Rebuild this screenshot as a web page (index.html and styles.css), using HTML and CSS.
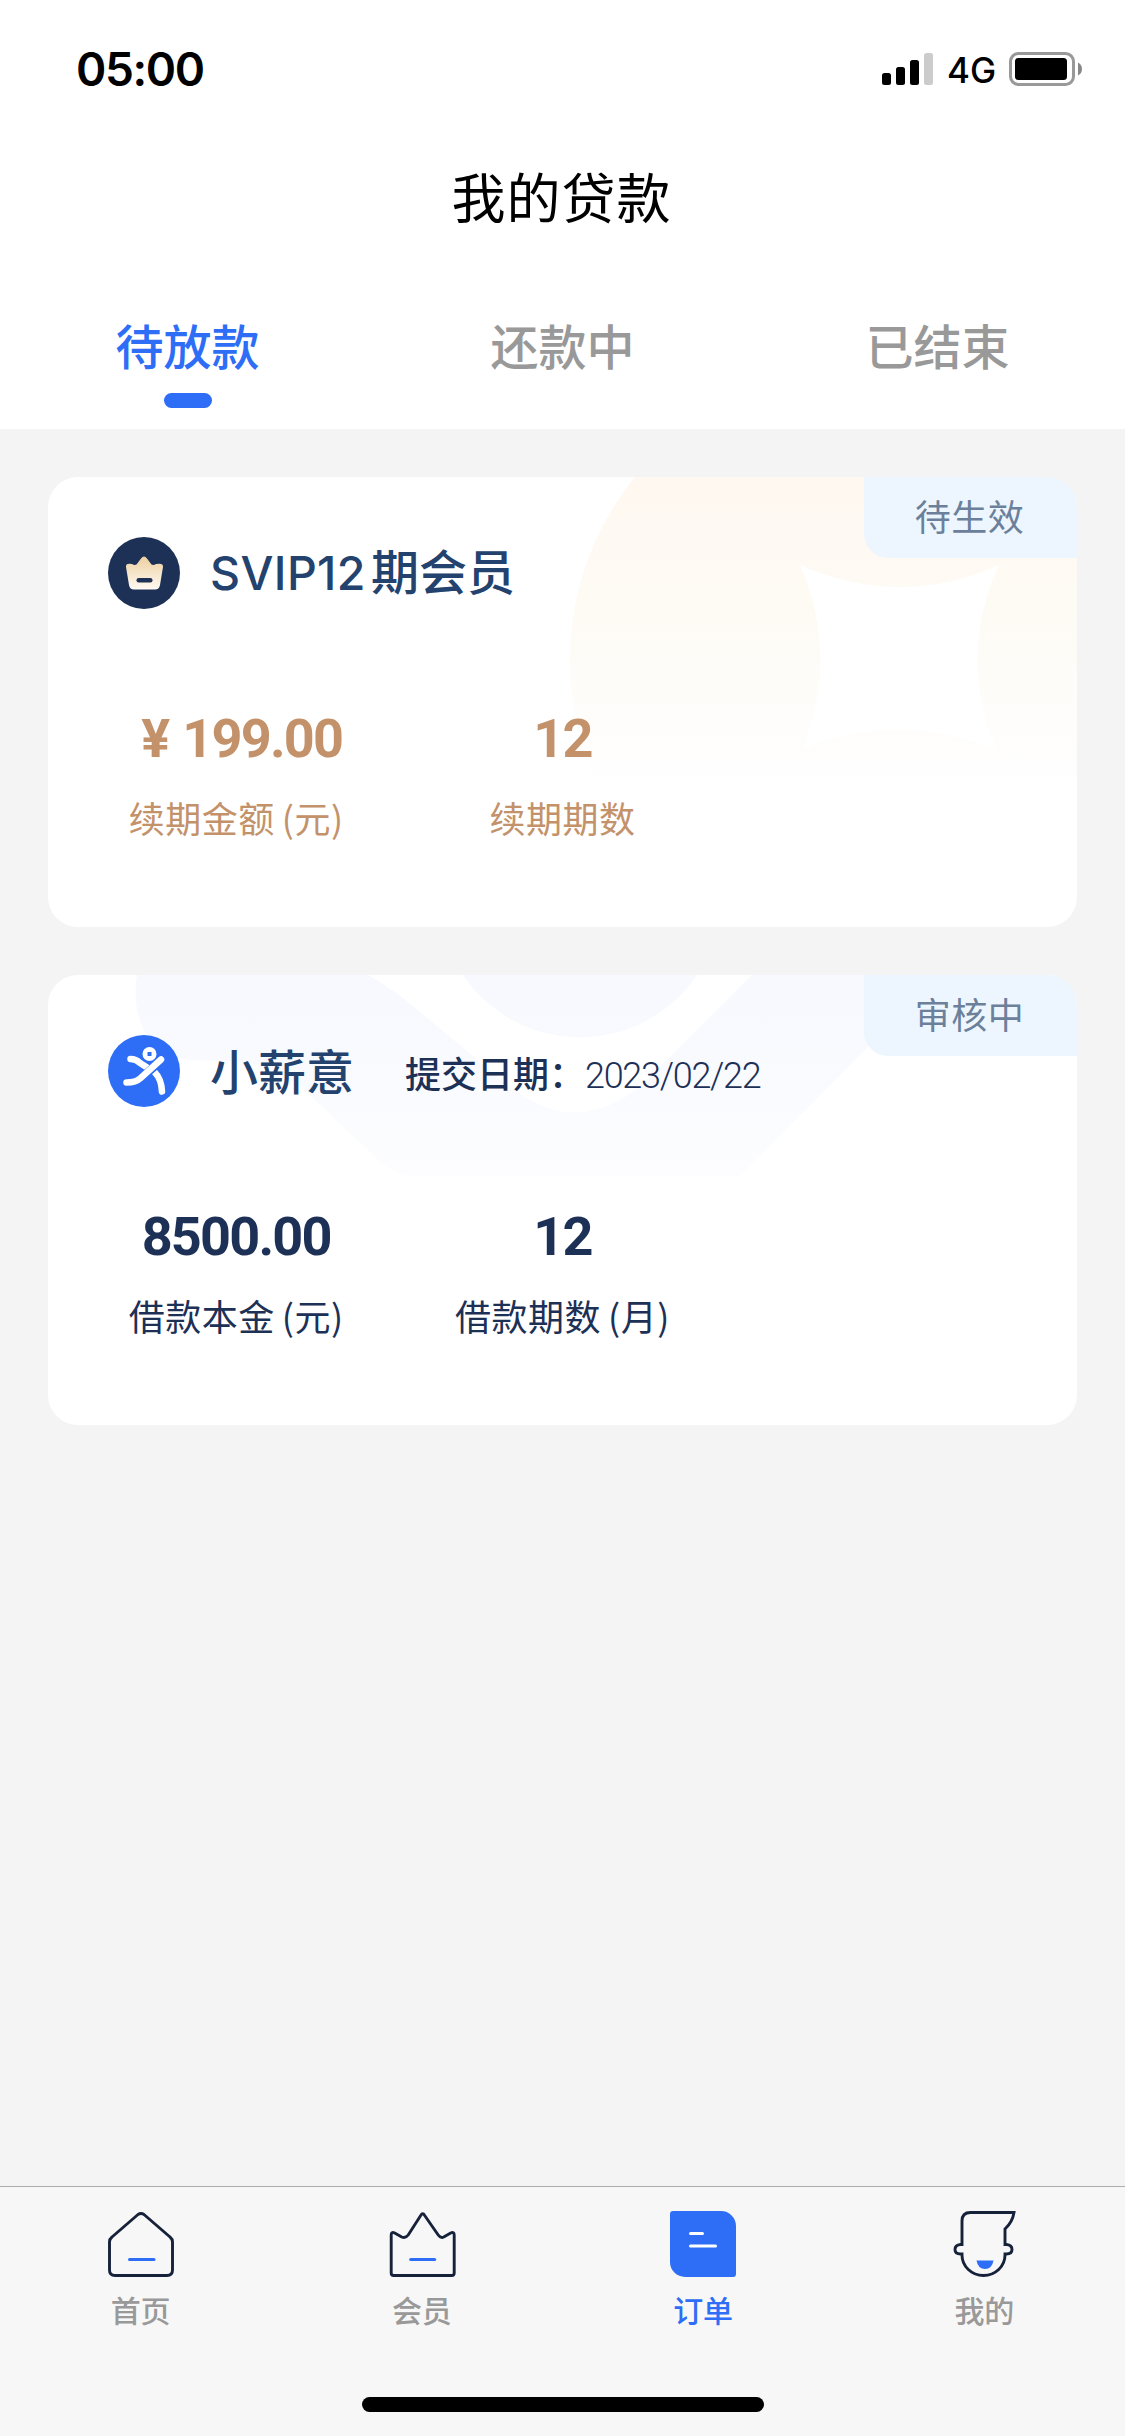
FILE: index.html
```html
<!DOCTYPE html>
<html lang="zh-CN">
<head>
<meta charset="utf-8">
<title>我的贷款</title>
<link rel="stylesheet" href="styles.css">
</head>
<body>
<div class="app">
  <header class="header">
    <div class="status">
      <span class="time">05:00</span>
      <div class="status-right">
        <svg class="signal" width="51" height="34" viewBox="0 0 51 34">
          <rect x="0" y="21" width="9" height="12" rx="2.5"/>
          <rect x="14" y="15" width="9" height="18" rx="2.5"/>
          <rect x="28" y="8" width="9" height="25" rx="2.5"/>
          <rect x="42" y="1" width="9" height="32" rx="2.5" fill="#ccc"/>
        </svg>
        <span class="network">4G</span>
        <svg width="73" height="34" viewBox="0 0 73 34">
          <rect x="1.5" y="1.5" width="63" height="31" rx="8" fill="none" stroke="#999" stroke-width="3"/>
          <rect x="6" y="6" width="52" height="22" rx="3.5"/>
          <path d="M69 10.5Q73 12.5 73 17T69 23.5Z" fill="#888"/>
        </svg>
      </div>
    </div>
    <h1 class="title">我的贷款</h1>
    <nav class="tabs">
      <a class="tab active">待放款</a>
      <a class="tab">还款中</a>
      <a class="tab">已结束</a>
    </nav>
  </header>

  <main class="list">
    <section class="card gold">
      <svg class="art" width="1029" height="450" viewBox="48 477 1029 450">
        <defs><linearGradient id="sand" gradientUnits="userSpaceOnUse" x1="0" y1="477" x2="0" y2="776"><stop offset="0" stop-color="#fef8f0"/><stop offset=".45" stop-color="#fefbf5"/><stop offset="1" stop-color="#fefefe"/></linearGradient></defs>
        <path d="M594 776A290 290 0 0 1 635 477H1077V776Z" fill="url(#sand)"/>
        <path d="M800 565Q900 609 999 565Q957 658 997 751Q900 709 802 749Q840 658 800 565Z" fill="#fff"/>
      </svg>
      <span class="badge">待生效</span>
      <div class="card-head">
        <svg width="72" height="72" viewBox="0 0 72 72">
          <defs><linearGradient id="crown" x1="0" y1="0" x2="0" y2="1"><stop offset="0" stop-color="#edcf9f"/><stop offset="1" stop-color="#fffaf3"/></linearGradient></defs>
          <circle cx="36" cy="36" r="36" fill="#1d3056"/>
          <path d="M33 21.500Q36 17.500 39 21.500L43.500 27.500Q45.500 28.500 48 27Q55.500 25.500 55 30L52 48Q51.200 52.500 47 52.500H26Q21.800 52.500 21 48L18 30Q17.500 25.500 24 27Q26.500 28.500 28.500 27.500Z" fill="url(#crown)"/>
          <rect x="28.500" y="41" width="16" height="4.500" rx="2.200" fill="#1d3056"/>
        </svg>
        <h2 class="name"><span class="latin">SVIP12</span>期会员</h2>
      </div>
      <div class="stats">
        <div class="stat"><b class="num price"><span class="yen">¥</span>199.00</b><span class="label">续期金额<i>(元)</i></span></div>
        <div class="stat"><b class="num">12</b><span class="label">续期期数</span></div>
      </div>
    </section>

    <section class="card navy">
      <svg class="art" width="1029" height="450" viewBox="48 975 1029 450">
        <defs><linearGradient id="mist" gradientUnits="userSpaceOnUse" x1="0" y1="975" x2="0" y2="1176"><stop offset="0" stop-color="#f7f9fe"/><stop offset=".4" stop-color="#f8fafe"/><stop offset="1" stop-color="#fdfdff"/></linearGradient></defs>
        <path d="M137 975Q132 1005 144 1030Q158 1058 190 1060L230 1061Q280 1064 315 1100L378 1160Q392 1173 410 1176H740L870 1045L940 975H752L665 1062Q645 1084 625 1097Q575 1128 525 1097Q505 1084 485 1066L420 1012Q395 990 368 975Z" fill="url(#mist)"/>
        <path d="M463 975A141 141 0 0 0 697 975Z" fill="url(#mist)"/>
      </svg>
      <span class="badge">审核中</span>
      <div class="card-head">
        <svg width="72" height="72" viewBox="0 0 72 72">
          <circle cx="36" cy="36" r="36" fill="#2e6ef7"/>
          <path fill="#fff" fill-rule="evenodd" d="M41.500 12A7 7 0 0 1 41.500 26A7 7 0 0 1 41.500 12ZM39.500 17V21H43.500V17Z"/>
          <g fill="none" stroke="#fff" stroke-width="6.500" stroke-linecap="round">
            <path d="M22.500 24Q28 24 32 28L39 32.500"/>
            <path d="M46.500 37Q53.500 44 54 56.500"/>
            <path d="M54 25L32 44Q28 48 18.500 47.500" stroke="#2e6ef7" stroke-width="8.500" stroke-linecap="butt"/>
            <path d="M53 24.500L32 43.500Q28 47.500 18.500 47.500"/>
          </g>
        </svg>
        <h2 class="name">小薪意</h2>
        <p class="submitted">提交日期：<span class="date">2023/02/22</span></p>
      </div>
      <div class="stats">
        <div class="stat"><b class="num">8500.00</b><span class="label">借款本金<i>(元)</i></span></div>
        <div class="stat"><b class="num">12</b><span class="label">借款期数<i>(月)</i></span></div>
      </div>
    </section>
  </main>

  <footer class="tabbar">
    <div class="items">
      <a class="item">
        <svg width="66" height="66" viewBox="0 0 66 66">
          <path d="M30 3.500Q33 1.500 36 3.500L62 26Q64.500 28 64.500 31V59Q64.500 64.500 59 64.500H7Q1.500 64.500 1.500 59V31Q1.500 28 4 26Z"/>
          <path class="accent" d="M21.500 48.500H46"/>
        </svg>首页
      </a>
      <a class="item">
        <svg width="66" height="66" viewBox="-.7 0 66 66">
          <path d="M1.500 24Q1.500 20.500 5 22L12 26Q16 27.500 18.500 24L31 4.500Q33 1 35 4.500L48.500 24Q51 27.500 54 26L61 22Q64.500 20.500 64.500 24V62Q64.500 64.500 62 64.500H4Q1.500 64.500 1.500 62Z"/>
          <path class="accent" d="M21 48.500H45"/>
        </svg>会员
      </a>
      <a class="item active">
        <svg width="66" height="66" viewBox="0 0 66 66">
          <path class="solid" d="M3 0H51A15 15 0 0 1 66 15V63Q66 66 63 66H15A15 15 0 0 1 0 51V3Q0 0 3 0Z"/>
          <path class="lines" d="M20.500 22.500H32.500M20.500 35H45.500"/>
        </svg>订单
      </a>
      <a class="item">
        <svg width="66" height="66" viewBox="-1.5 0 66 66">
          <path d="M9.500 33.500V10Q9.500 1.500 18 1.500H61.500Q60 11 52.500 18V33.500H54Q59.500 34 59.500 38.500T54 43H52.500V44A21.500 20.500 0 0 1 9.500 44V43H8Q2.500 43 2.500 38.500T8 33.500Z" class="face"/>
          <path class="mouth" d="M24 49.500H41Q39.500 58 32.500 58T24 49.500Z"/>
        </svg>我的
      </a>
    </div>
    <div class="home-bar"></div>
  </footer>
</div>
</body>
</html>
```

FILE: styles.css
```css
* { box-sizing: border-box; }
body { margin: 0; font-family: "Noto Sans CJK SC", sans-serif; background: #f4f4f4; }
h1, h2, p { margin: 0; }
.app { width: 1125px; height: 2436px; display: flex; flex-direction: column; background: #f4f4f4; overflow: hidden; }

.header { height: 429px; background: #fff; display: flex; flex-direction: column; flex: none; }
.status { height: 138px; padding: 0 43px 0 76px; display: flex; justify-content: space-between; align-items: center; font-family: Inter, sans-serif; color: #000; }
.time { font-size: 46px; font-weight: 600; line-height: 60px; letter-spacing: -1.4px; }
.status-right { display: flex; align-items: center; }
.network { width: 76px; padding: 2px 0 0 14px; font-size: 35px; font-weight: 450; line-height: 40px; }
.title { height: 115px; line-height: 115px; padding-right: 2px; text-align: center; font-size: 54px; font-weight: 400; letter-spacing: 1px; }
.tabs { display: grid; grid-template-columns: repeat(3, 1fr); padding-top: 56px; }
.tab { display: flex; flex-direction: column; align-items: center; font-size: 48px; font-weight: 500; line-height: 70px; color: #999; }
.tab.active { color: #2e6ef7; }
.tab.active::after { content: ""; width: 48px; height: 15px; margin-top: 14px; border-radius: 7.5px; background: #2e6ef7; }

.list { flex: 1; padding: 48px; display: flex; flex-direction: column; gap: 48px; }
.card { position: relative; height: 450px; border-radius: 30px; background: #fff; overflow: hidden; flex: none; }
.art { position: absolute; left: 0; top: 0; }
.badge { position: absolute; right: 0; top: 0; width: 213px; height: 81px; line-height: 77px; padding-right: 2px; text-align: center; font-size: 36px; letter-spacing: .5px; color: #6c809b; background: #edf6fe; border-bottom-left-radius: 24px; }
.card-head { position: relative; display: flex; align-items: center; height: 72px; margin: 60px 0 0 60px; }
.name { margin-left: 30px; padding-bottom: 4px; font-size: 48px; line-height: 72px; font-weight: 500; color: #23426e; }
.latin { font-family: Inter, sans-serif; font-size: 46.5px; margin-right: 5px; letter-spacing: .4px; }
.submitted { margin-left: 51px; padding-top: 6px; font-size: 36px; line-height: 52px; font-weight: 500; color: #1d3056; white-space: nowrap; }
.date { font-family: Roboto, sans-serif; font-weight: 300; letter-spacing: -1.3px; }
.stats { position: relative; display: grid; grid-template-columns: repeat(3, 1fr); margin-top: 95px; padding: 0 25px; }
.stat { display: flex; flex-direction: column; align-items: center; }
.num { font-family: Roboto, sans-serif; font-size: 54px; line-height: 70px; font-weight: 700; letter-spacing: -1.8px; }
.price { padding-left: 11px; }
.yen { margin-right: 14px; }
.label { margin-top: 17px; font-size: 36px; line-height: 52px; letter-spacing: .5px; }
.label i { font-style: normal; margin-left: 7px; }
.gold .stats { color: #c3926a; }
.navy .stats { color: #1d3056; }

.tabbar { height: 250px; flex: none; display: flex; flex-direction: column; align-items: center; background: #f7f7f7; border-top: 1px solid #aaadaa; }
.items { width: 100%; height: 210px; padding-top: 24px; display: grid; grid-template-columns: repeat(4, 1fr); }
.item { display: flex; flex-direction: column; align-items: center; gap: 10px; font-size: 30px; font-weight: 500; line-height: 44px; color: #999; }
.item svg { overflow: visible; }
.item.active { color: #2e6ef7; }
.item path { fill: none; stroke: #16213a; stroke-width: 2.9; stroke-linejoin: round; stroke-linecap: round; }
.item .face { stroke-linejoin: miter; }
.item .accent { stroke: #2e6ef7; stroke-width: 3; }
.item .solid { fill: #2e6ef7; stroke: none; }
.item .lines { stroke: #fff; stroke-width: 3; }
.item .mouth { fill: #2e6ef7; stroke: none; }
.home-bar { width: 402px; height: 15px; border-radius: 7.5px; background: #000; }
```
